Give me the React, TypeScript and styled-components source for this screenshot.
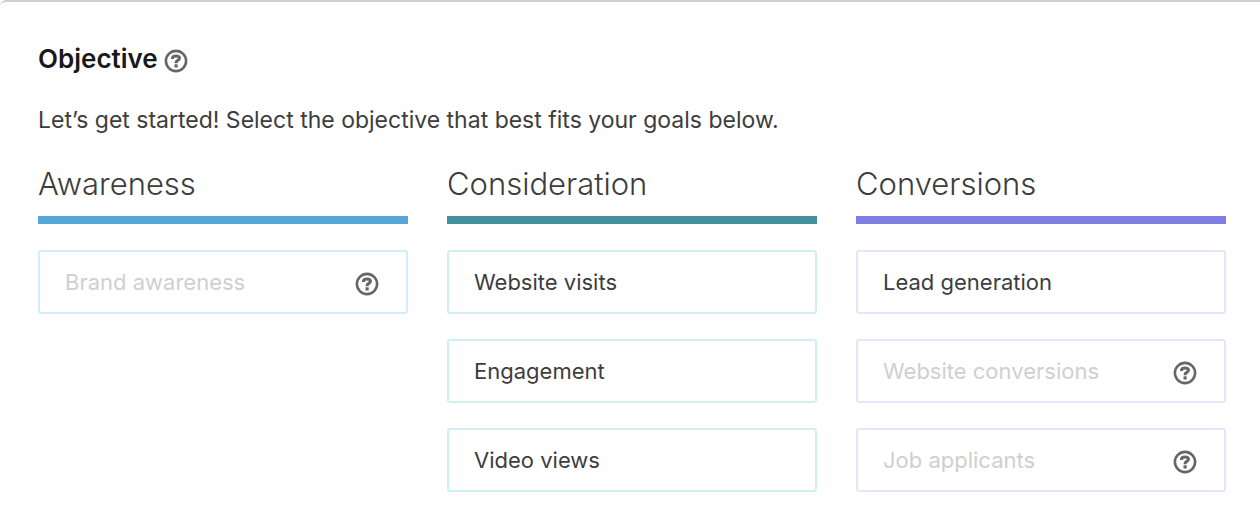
import React from "react";
import styled, { createGlobalStyle } from "styled-components";

const GlobalStyle = createGlobalStyle`
  *, *::before, *::after { box-sizing: border-box; }
  body {
    margin: 0;
    background: #fff;
    color: #3d3d3d;
    font-family: Inter, "Liberation Sans", sans-serif;
    font-size: 22px;
    line-height: 32px;
  }
`;

const Panel = styled.section`
  min-height: 100vh;
  padding: 41px 34px 40px 38px;
  border-top: 2px solid #cfcfcf;
  border-top-left-radius: 6px;
  background: #fff;
`;

const TitleRow = styled.div`
  display: flex;
  align-items: center;
  gap: 6px;
`;

const Title = styled.h1`
  margin: 0;
  color: #191919;
  font-size: 26px;
  font-weight: 600;
  line-height: 32px;
`;

const HelpButton = styled.button`
  display: flex;
  padding: 4px 0 0;
  border: 0;
  background: none;
  color: #666;
  cursor: pointer;
`;

const Intro = styled.p`
  margin: 29px 0 0;
  font-size: 23px;
`;

const Columns = styled.div`
  display: grid;
  grid-template-columns: repeat(3, minmax(0, 1fr));
  gap: 39px;
  margin-top: 28px;
`;

const ColumnTitle = styled.h2<{ $accent: string }>`
  margin: 0 0 26px;
  padding-bottom: 12px;
  border-bottom: 8px solid ${(p) => p.$accent};
  font-size: 31px;
  font-weight: 300;
  line-height: 40px;
`;

const Options = styled.ul`
  display: grid;
  gap: 25px;
  margin: 0;
  padding: 0;
  list-style: none;
`;

const Option = styled.li<{ $border: string }>`
  display: flex;
  align-items: center;
  height: 64px;
  padding-right: 27px;
  border: 2px solid ${(p) => p.$border};
  border-radius: 3px;
`;

const OptionButton = styled.button`
  flex: 1;
  align-self: stretch;
  padding: 0 0 0 25px;
  border: 0;
  background: none;
  color: #3d3d3d;
  font: inherit;
  text-align: left;
  cursor: pointer;

  &:disabled {
    color: #cfcfcf;
    cursor: default;
  }
`;

const Help = ({ label }: { label: string }) => (
  <HelpButton type="button" aria-label={label}>
    <svg width="24" height="24" viewBox="0 0 24 24" fill="none" aria-hidden="true">
      <circle cx="12" cy="12" r="10.1" stroke="currentColor" strokeWidth="2.6" />
      <path
        d="M8.5 10V9.2C8.5 7.7 9.8 6.9 12 6.9S15.5 7.8 15.5 9.3C15.5 11.5 12.1 11.3 12.1 13.6V14.2"
        stroke="currentColor"
        strokeWidth="3"
      />
      <rect x="10.5" y="15.3" width="3.2" height="3.2" fill="currentColor" />
    </svg>
  </HelpButton>
);

const columns = [
  {
    title: "Awareness",
    accent: "#56a7d8",
    border: "#d0ecfd",
    options: [{ name: "Brand awareness", disabled: true }],
  },
  {
    title: "Consideration",
    accent: "#42919d",
    border: "#d0eff3",
    options: [
      { name: "Website visits", disabled: false },
      { name: "Engagement", disabled: false },
      { name: "Video views", disabled: false },
    ],
  },
  {
    title: "Conversions",
    accent: "#7f7de2",
    border: "#e5e5fd",
    options: [
      { name: "Lead generation", disabled: false },
      { name: "Website conversions", disabled: true },
      { name: "Job applicants", disabled: true },
    ],
  },
];

export default function App() {
  return (
    <>
      <GlobalStyle />
      <Panel>
        <TitleRow>
          <Title>Objective</Title>
          <Help label="About objectives" />
        </TitleRow>
        <Intro>Let’s get started! Select the objective that best fits your goals below.</Intro>
        <Columns>
          {columns.map((column) => (
            <div key={column.title}>
              <ColumnTitle $accent={column.accent}>{column.title}</ColumnTitle>
              <Options>
                {column.options.map((option) => (
                  <Option key={option.name} $border={column.border}>
                    <OptionButton type="button" disabled={option.disabled}>
                      {option.name}
                    </OptionButton>
                    {option.disabled && <Help label={`About ${option.name}`} />}
                  </Option>
                ))}
              </Options>
            </div>
          ))}
        </Columns>
      </Panel>
    </>
  );
}
